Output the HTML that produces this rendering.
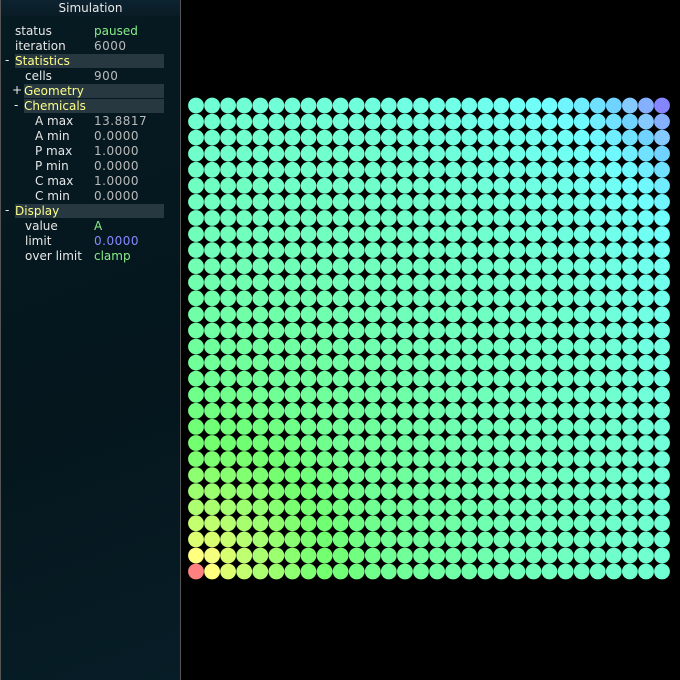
<!DOCTYPE html>
<html><head><style>
html,body{margin:0;padding:0;background:#000;width:680px;height:680px;overflow:hidden;font-family:"DejaVu Sans","Liberation Sans",sans-serif;font-size:12px}
#panel{position:absolute;left:0;top:0;width:179px;height:680px;border-left:1px solid #555;border-right:1px solid #555;background:linear-gradient(160deg,#061a22 0%,#05161d 60%,#071d27 100%)}
#title{height:16px;line-height:16px;text-align:center;color:#e8e8e8;background:linear-gradient(#0c2330,#0a1c26);font-size:12px}
.r{position:absolute;height:15px;line-height:15px;color:#e8e8e8;white-space:nowrap}
.v{position:absolute;left:93px;height:15px;line-height:15px;color:#bbb;letter-spacing:0.5px}
.h{position:absolute;height:14px;background:#273840;color:#ffff88;line-height:14px;right:16px}
.g{color:#88ee88}
.b{color:#8888ff}
.pm{position:absolute;color:#eee;line-height:15px}
</style></head><body>
<div id="panel">
<div id="title">Simulation</div>
<div class="r" style="left:14px;top:24px">status</div><div class="v g" style="top:24px;letter-spacing:0">paused</div>
<div class="r" style="left:14px;top:39px">iteration</div><div class="v" style="top:39px">6000</div>
<div class="pm" style="left:4px;top:53px">-</div><div class="h" style="left:14px;top:54px">Statistics</div>
<div class="r" style="left:24px;top:69px">cells</div><div class="v" style="top:69px">900</div>
<div class="pm" style="left:11px;top:83px">+</div><div class="h" style="left:23px;top:84px">Geometry</div>
<div class="pm" style="left:13px;top:98px">-</div><div class="h" style="left:23px;top:99px">Chemicals</div>
<div class="r" style="left:34px;top:114px">A max</div><div class="v" style="top:114px">13.8817</div>
<div class="r" style="left:34px;top:129px">A min</div><div class="v" style="top:129px">0.0000</div>
<div class="r" style="left:34px;top:144px">P max</div><div class="v" style="top:144px">1.0000</div>
<div class="r" style="left:34px;top:159px">P min</div><div class="v" style="top:159px">0.0000</div>
<div class="r" style="left:34px;top:174px">C max</div><div class="v" style="top:174px">1.0000</div>
<div class="r" style="left:34px;top:189px">C min</div><div class="v" style="top:189px">0.0000</div>
<div class="pm" style="left:4px;top:203px">-</div><div class="h" style="left:14px;top:204px">Display</div>
<div class="r" style="left:24px;top:219px">value</div><div class="v g" style="top:219px">A</div>
<div class="r" style="left:24px;top:234px">limit</div><div class="v b" style="top:234px">0.0000</div>
<div class="r" style="left:24px;top:249px">over limit</div><div class="v g" style="top:249px;letter-spacing:0">clamp</div>
</div>
<svg id="grid" style="position:absolute;left:0;top:0" width="680" height="680"></svg>
<script>
var pts=[[0,0],[1,60],[1.42,65],[2,75],[4,95],[7,115],[12,135],[20,150],[28,160],[34,172],[36,178],[38,190],[40,210],[41.02,240]];
function hue(d){for(var i=1;i<pts.length;i++){if(d<=pts[i][0]){var a=pts[i-1],b=pts[i];return a[1]+(b[1]-a[1])*(d-a[0])/(b[0]-a[0]);}}return 240;}
var s='';
for(var r=0;r<30;r++)for(var c=0;c<30;c++){
var d=Math.sqrt(c*c+(29-r)*(29-r));var h=hue(d);var l=h>200?76:(h<70?75:72);
var x=196+c*16.07,y=105.5+r*16.07;
s+='<circle cx="'+x.toFixed(1)+'" cy="'+y.toFixed(1)+'" r="7.9" fill="hsl('+h.toFixed(0)+',100%,'+l+'%)"/>';}
document.getElementById('grid').innerHTML=s;
</script>
</body></html>
